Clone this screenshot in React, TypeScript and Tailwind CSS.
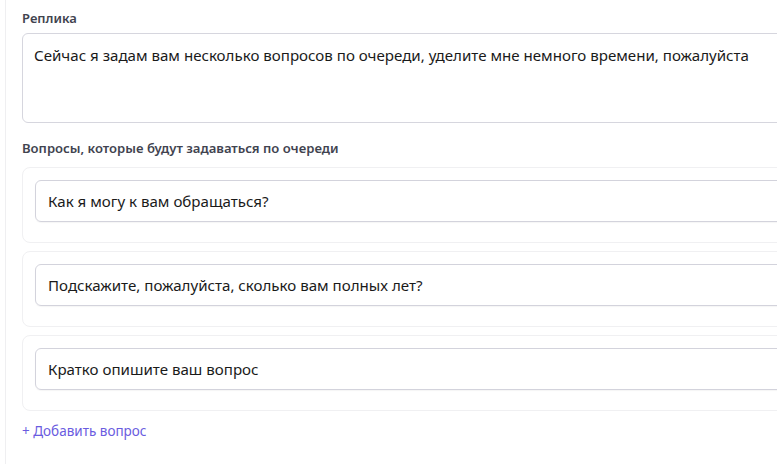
const questions = [
  "Как я могу к вам обращаться?",
  "Подскажите, пожалуйста, сколько вам полных лет?",
  "Кратко опишите ваш вопрос",
];

export default function App() {
  return (
    <div
      className="h-[464px] w-[777px] overflow-hidden bg-white"
      style={{ fontFamily: '"Noto Sans", "Open Sans", sans-serif' }}
    >
      <div className="ml-[5px] h-full w-[840px] border-l border-[#efeff1] pl-[16px] pt-[8px]">
        <div className="text-[13px] font-semibold leading-[20px] text-[#41434f]">Реплика</div>
        <div className="mt-[5px] h-[90px] rounded-[6px] border border-[#d6d6de] px-[11px] pt-[11px] text-[15.1px] leading-[20px] text-[#1a1a1a]">
          Сейчас я задам вам несколько вопросов по очереди, уделите мне немного времени, пожалуйста
        </div>

        <div className="mt-[15px] text-[13.1px] font-semibold leading-[20px] text-[#41434f]">
          Вопросы, которые будут задаваться по очереди
        </div>
        <div className="mt-[9px] flex flex-col gap-[8px]">
          {questions.map((q) => (
            <div key={q} className="rounded-[8px] border border-[#f0f0f2] px-[12px] pb-[20px] pt-[12px]">
              <div className="flex h-[42px] items-center rounded-[6px] border border-[#d3d3dc] px-[12px] text-[15.1px] text-[#1a1a1a] shadow-[0_1px_1px_rgba(0,0,0,0.04)]">
                {q}
              </div>
            </div>
          ))}
        </div>

        <button className="mt-[10px] text-[13.5px] leading-[20px] text-[#6a5ce0]">+ Добавить вопрос</button>
      </div>
    </div>
  );
}
